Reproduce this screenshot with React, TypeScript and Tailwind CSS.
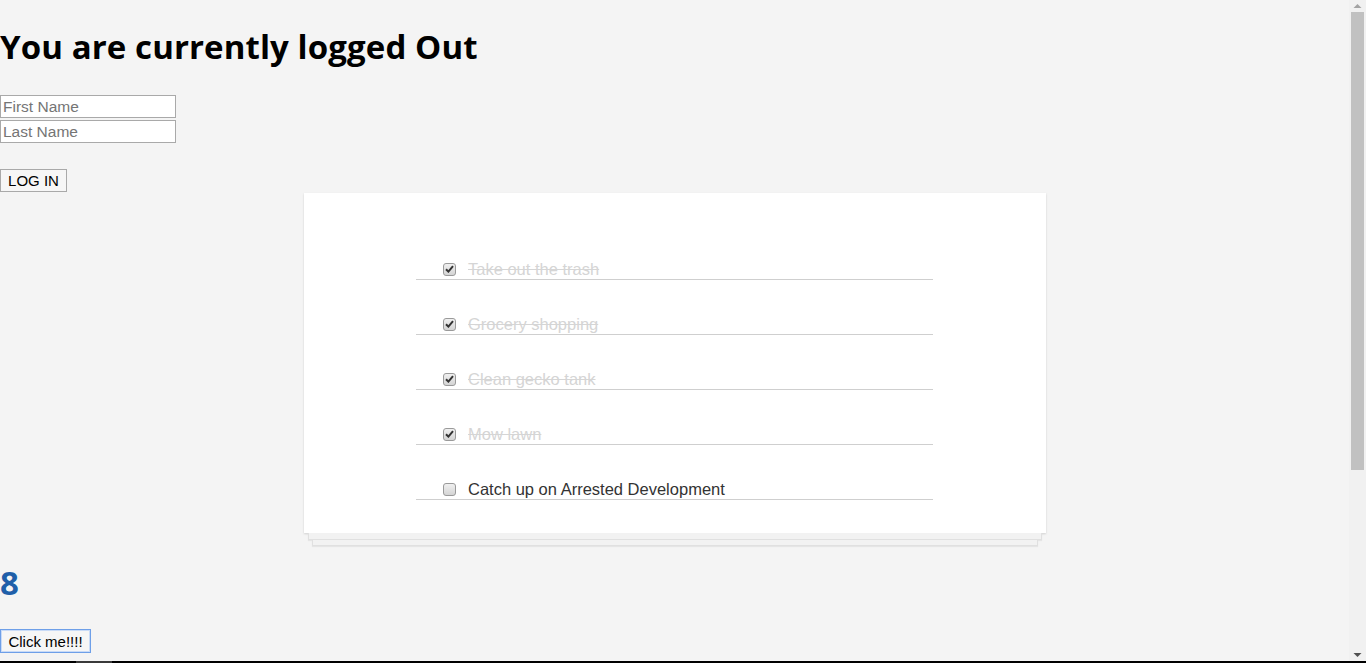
import React from "react";

const todos = [
  { text: "Take out the trash", done: true },
  { text: "Grocery shopping", done: true },
  { text: "Clean gecko tank", done: true },
  { text: "Mow lawn", done: true },
  { text: "Catch up on Arrested Development", done: false },
];

function Box({ checked }: { checked: boolean }) {
  return (
    <span className="flex h-[13px] w-[13px] shrink-0 items-center justify-center rounded-[3px] border border-[#9a9a9a] bg-gradient-to-b from-[#f0f0f0] to-[#d4d4d4]">
      {checked && (
        <svg width="9" height="8" viewBox="0 0 9 8">
          <path d="M1 4.2 L3.4 6.6 L8 1.2" fill="none" stroke="#333" strokeWidth="2" />
        </svg>
      )}
    </span>
  );
}

export default function App() {
  return (
    <div className="flex h-[663px] w-[1366px] flex-col overflow-hidden bg-[#f4f4f4] font-['Liberation_Sans',Arial,sans-serif]">
      <div className="flex min-h-0 flex-1">
        <main className="min-w-0 flex-1">
          <h1 className="mt-[27px] text-[33px] leading-[40px] font-bold text-black font-['Open_Sans',sans-serif] tracking-[0.1px]">
            You are currently logged Out
          </h1>
          <div className="mt-[28px] flex flex-col gap-[2px]">
            <input
              className="h-[23px] w-[176px] border border-[#a9a9a9] bg-white px-[2px] text-[15.5px] text-black placeholder:text-[#757575] outline-none"
              placeholder="First Name"
            />
            <input
              className="h-[23px] w-[176px] border border-[#a9a9a9] bg-white px-[2px] text-[15.5px] text-black placeholder:text-[#757575] outline-none"
              placeholder="Last Name"
            />
          </div>
          <button className="mt-[26px] block h-[23px] w-[67px] border border-[#a9a9a9] bg-[#f6f6f6] text-[15px] leading-[21px] text-black">
            LOG IN
          </button>
          <section className="mx-auto mt-[1px] w-[742px]">
            <div className="bg-white pt-[32px] pb-[33px] shadow-[0_1px_2px_rgba(0,0,0,0.15)]">
              <ul className="mx-auto w-[517px]">
                {todos.map((t) => (
                  <li
                    key={t.text}
                    className="flex h-[55px] items-end border-b border-[#cfcfcf] pl-[27px]"
                  >
                    <div className="flex items-center gap-[12px]">
                      <Box checked={t.done} />
                      <span
                        className={
                          t.done
                            ? "text-[16.5px] leading-[20px] text-[#d5d5d5] line-through"
                            : "text-[16.5px] leading-[20px] text-[#333]"
                        }
                      >
                        {t.text}
                      </span>
                    </div>
                  </li>
                ))}
              </ul>
            </div>
            <div className="mx-[4px] h-[7px] border border-t-0 border-[#e0e0e0] bg-[#f2f2f2] shadow-[0_1px_1px_rgba(0,0,0,0.06)]" />
            <div className="mx-[8px] h-[6px] border border-t-0 border-[#e0e0e0] bg-[#f2f2f2] shadow-[0_1px_1px_rgba(0,0,0,0.06)]" />
          </section>
          <h1 className="mt-[17px] text-[33px] leading-[40px] font-bold text-[#1f5fa9] font-['Open_Sans',sans-serif]">
            8
          </h1>
          <button className="mt-[26px] block h-[24px] w-[91px] border border-[#6e9fe8] bg-[#f6f6f6] text-[15px] leading-[21px] text-black ring-1 ring-inset ring-[#c9dbf7]">
            Click me!!!!
          </button>
        </main>
        <div className="flex w-[17px] shrink-0 flex-col items-center bg-[#f1f1f1]">
          <svg width="9" height="12" viewBox="0 0 9 12" className="shrink-0">
            <path d="M0.5 8 L4.5 4 L8.5 8 Z" fill="#a3a3a3" />
          </svg>
          <div className="h-[458px] w-[13px] bg-[#c1c1c1]" />
          <div className="flex-1" />
          <svg width="9" height="12" viewBox="0 0 9 12" className="shrink-0">
            <path d="M0.5 4 L4.5 8 L8.5 4 Z" fill="#505050" />
          </svg>
        </div>
      </div>
      <div className="flex h-[2px] shrink-0 bg-black">
        <div className="ml-[76px] w-[36px] bg-[#3a3a3a]" />
      </div>
    </div>
  );
}
